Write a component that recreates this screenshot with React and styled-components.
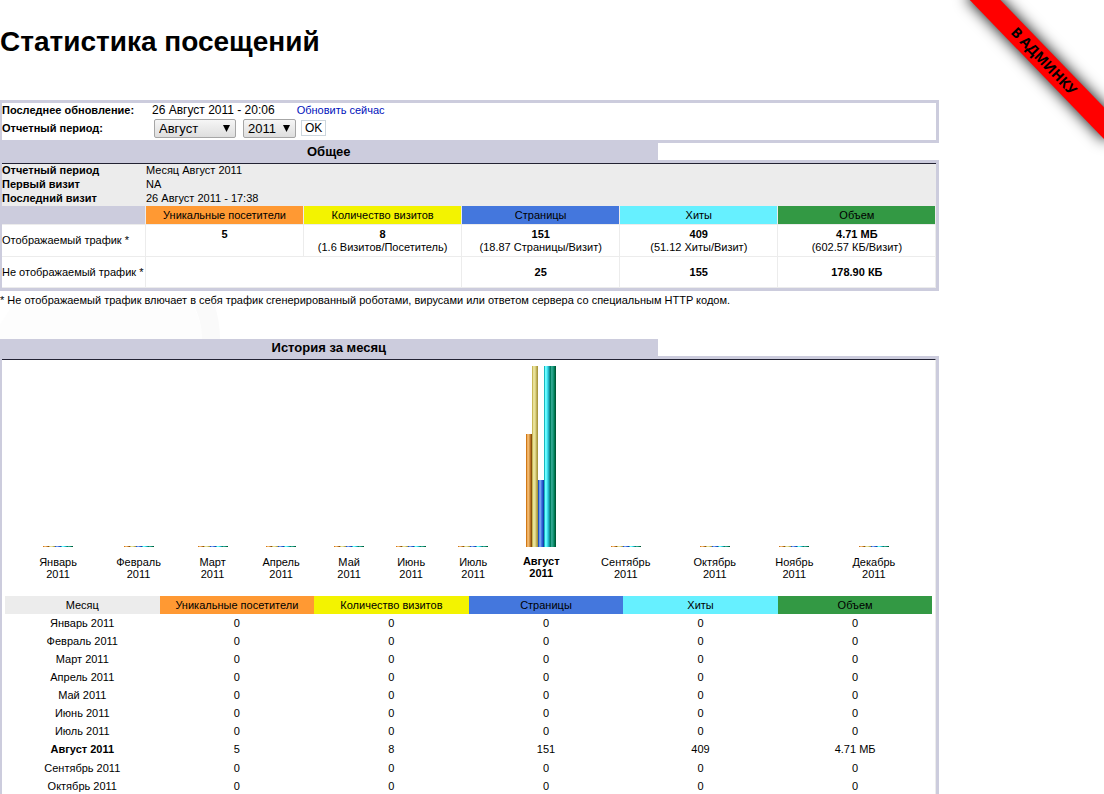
import React from "react";
import styled, { createGlobalStyle } from "styled-components";

const LILAC = "#ccccdd";
const LINE = "#ececec";

const Global = createGlobalStyle`
  *, *::before, *::after { box-sizing: border-box; }
  body {
    margin: 0;
    background: #fff;
    color: #000;
    font: 11px/14px "Liberation Sans", Arial, sans-serif;
    overflow-x: hidden;
  }
`;

const Page = styled.div`
  position: relative;
  overflow: hidden;
  padding-top: 24px;
`;

const Title = styled.h1`
  margin: 0 0 40px;
  font-size: 28px;
  line-height: 36px;
`;

const Content = styled.main`
  width: calc(85% + 1px);
`;

const Panel = styled.section`
  border: 3px solid ${LILAC};
  border-left-width: 2px;
`;

const PanelTitle = styled.h2`
  width: 70%;
  height: 17px;
  margin: 0;
  background: ${LILAC};
  font-size: 13px;
  line-height: 17px;
  text-align: center;
`;

const Ruled = styled.div`
  border-top: 1px solid #222233;
  border-right: ${(p) => (p.$edge ? `1px solid ${LINE}` : "0")};
`;

const Controls = styled.form`
  display: grid;
  grid-template-columns: 150px 1fr;
  grid-template-rows: 13px 22px;
  row-gap: 1px;
  align-items: center;
  padding-bottom: 1px;
`;

const ControlLabel = styled.label`
  font-weight: bold;
`;

const ControlLine = styled.div`
  display: flex;
  align-items: center;
  font-size: 12px;
  gap: ${(p) => p.$gap}px;
  padding-left: ${(p) => p.$indent || 0}px;
`;

const UpdateLink = styled.a`
  color: #0011bb;
  font-size: 11px;
  text-decoration: none;
`;

const SelectBox = styled.span`
  display: grid;
  align-items: center;
  margin-right: ${(p) => p.$after}px;
`;

const Select = styled.select`
  grid-area: 1 / 1;
  appearance: none;
  width: ${(p) => p.$width}px;
  height: 19px;
  padding: 0 4px;
  border: 1px solid #a6a6a6;
  border-radius: 2px;
  background: linear-gradient(#f6f6f6, #dedede);
  color: #000;
  font: 13px/17px "Liberation Sans", Arial, sans-serif;
`;

const Arrow = styled.svg`
  grid-area: 1 / 1;
  justify-self: end;
  margin-right: 6px;
  pointer-events: none;
`;

const OkButton = styled.button`
  height: 16px;
  padding: 0 3px;
  border: 1px solid #ccd6dd;
  background: #fff;
  color: #000;
  font: 12px/14px "Liberation Sans", Arial, sans-serif;
`;

const Facts = styled.dl`
  display: grid;
  grid-template-columns: 144px 1fr;
  grid-auto-rows: 14px;
  margin: 0;
  background: ${LINE};
  line-height: 12px;
  dt { font-weight: bold; }
  dd { margin: 0; }
`;

const Table = styled.table`
  width: 100%;
  border-collapse: separate;
  border-spacing: 0;
  table-layout: fixed;
  line-height: 13px;
  text-align: center;
  th, td { padding: 0; font-weight: normal; }
`;

const HeadCell = styled.th`
  height: ${(p) => (p.$ruled ? 19 : 18)}px;
  background: ${(p) => p.$color};
  background-clip: padding-box;
  border: 0 solid ${LINE};
  border-width: ${(p) => (p.$ruled ? "0 1px 1px 0" : "0")};
`;

const LabelHead = styled(HeadCell)`
  width: 144px;
`;

const TrafficCell = styled.td`
  height: ${(p) => p.$height}px;
  border: 0 solid ${LINE};
  border-width: 0 1px 1px 0;
`;

const TrafficLabel = styled(TrafficCell)`
  text-align: left;
`;

const Note = styled.div`
  position: relative;
  height: 48px;
  padding-top: 2px;
  overflow: hidden;
`;

const NoteText = styled.p`
  position: relative;
  margin: 0;
`;

const Watermark = styled.svg`
  position: absolute;
  left: 0;
  bottom: 0;
`;

const Chart = styled.div`
  display: grid;
  grid-template-columns: 76fr 85fr 63fr 74fr 62fr 62fr 62fr 74fr 95fr 83fr 76fr 83fr;
  padding: 6px 20px 16px 18px;
  text-align: center;
  line-height: 12px;
`;

const MonthColumn = styled.div`
  display: flex;
  flex-direction: column;
  align-items: center;
  font-weight: ${(p) => (p.$current ? "bold" : "normal")};
`;

const Bars = styled.div`
  display: flex;
  align-items: flex-end;
  height: 181px;
  margin-bottom: ${(p) => (p.$current ? 8 : 9)}px;
`;

const Bar = styled.div`
  width: 6px;
  background: ${(p) => p.$fill};
`;

const Months = styled.div`
  padding: 0 3px;
`;

const MonthCell = styled.td`
  height: ${(p) => (p.$current ? 19 : 18)}px;
`;

const MonthName = styled.th`
  && { font-weight: ${(p) => (p.$current ? "bold" : "normal")}; }
`;

const Ribbon = styled.a`
  position: absolute;
  top: 50px;
  right: -40px;
  width: 200px;
  height: 22px;
  background: #f00;
  box-shadow: 0 0 15px #000;
  color: #000;
  font: bold 14px/22px "Open Sans", sans-serif;
  text-align: center;
  text-decoration: none;
  transform: rotate(46deg);
`;

const stripes = (...colors) =>
  `linear-gradient(90deg, ${colors
    .map((c, i) => `${c} ${i}px ${i + 1}px`)
    .join(", ")})`;

const FILLS = [
  stripes("#d07818", "#f0b060", "#f0b870", "#d89848", "#b87020", "#885010"),
  stripes("#c8b858", "#e8e098", "#e8e098", "#d8d080", "#c0b058", "#a89840"),
  stripes("#2050c0", "#6898f0", "#78a0f0", "#4878e0", "#2858d0", "#1840a8"),
  stripes("#18b8c0", "#70ffff", "#60f8ff", "#40d8e8", "#20b8c8", "#109098"),
  stripes("#008060", "#30a890", "#28a088", "#109070", "#007850", "#005838"),
];

const HEADS = [
  ["Уникальные посетители", "#ff9933"],
  ["Количество визитов", "#f3f300"],
  ["Страницы", "#4477dd"],
  ["Хиты", "#66f0ff"],
  ["Объем", "#339944"],
];

const VIEWED = [
  ["5", ""],
  ["8", "(1.6 Визитов/Посетитель)"],
  ["151", "(18.87 Страницы/Визит)"],
  ["409", "(51.12 Хиты/Визит)"],
  ["4.71 МБ", "(602.57 КБ/Визит)"],
];

const MONTHS = [
  "Январь", "Февраль", "Март", "Апрель", "Май", "Июнь",
  "Июль", "Август", "Сентябрь", "Октябрь", "Ноябрь", "Декабрь",
];
const CURRENT = "Август";
const EMPTY_BARS = [1, 1, 1, 1, 1];
const CURRENT_BARS = [113, 181, 67, 181, 181];
const EMPTY_VALUES = ["0", "0", "0", "0", "0"];
const CURRENT_VALUES = ["5", "8", "151", "409", "4.71 МБ"];

function Dropdown({ id, label, width, after, options, value }) {
  return (
    <SelectBox $after={after}>
      <Select id={id} aria-label={label} $width={width} defaultValue={value}>
        {options.map((o) => <option key={o}>{o}</option>)}
      </Select>
      <Arrow width="7" height="7" viewBox="0 0 7 7" aria-hidden="true">
        <path d="M0 0H7L3.5 7Z" />
      </Arrow>
    </SelectBox>
  );
}

export default function App() {
  return (
    <>
      <Global />
      <Page>
        <Title>Статистика посещений</Title>
        <Content>
          <Panel>
            <Controls onSubmit={(e) => e.preventDefault()}>
              <ControlLabel as="span">Последнее обновление:</ControlLabel>
              <ControlLine $gap={22}>
                <span>26 Август 2011 - 20:06</span>
                <UpdateLink href="#update">Обновить сейчас</UpdateLink>
              </ControlLine>
              <ControlLabel htmlFor="month">Отчетный период:</ControlLabel>
              <ControlLine $gap={0} $indent={2}>
                <Dropdown id="month" label="Месяц" width={82} after={7} options={MONTHS} value={CURRENT} />
                <Dropdown id="year" label="Год" width={53} after={5} options={["2010", "2011"]} value="2011" />
                <OkButton type="submit">OK</OkButton>
              </ControlLine>
            </Controls>
          </Panel>

          <PanelTitle>Общее</PanelTitle>
          <Panel>
            <Ruled>
              <Facts>
                <dt>Отчетный период</dt>
                <dd>Месяц Август 2011</dd>
                <dt>Первый визит</dt>
                <dd>NA</dd>
                <dt>Последний визит</dt>
                <dd>26 Август 2011 - 17:38</dd>
              </Facts>
              <Table>
                <thead>
                  <tr>
                    <LabelHead $ruled $color={LILAC} />
                    {HEADS.map(([name, color]) => (
                      <HeadCell key={name} $ruled $color={color}>{name}</HeadCell>
                    ))}
                  </tr>
                </thead>
                <tbody>
                  <tr>
                    <TrafficLabel $height={32}>Отображаемый трафик *</TrafficLabel>
                    {VIEWED.map(([value, rate]) => (
                      <TrafficCell key={value} $height={32}>
                        <b>{value}</b>
                        <br />
                        {rate || "\u00a0"}
                      </TrafficCell>
                    ))}
                  </tr>
                  <tr>
                    <TrafficLabel $height={31}>Не отображаемый трафик *</TrafficLabel>
                    <TrafficCell colSpan={2} $height={31} />
                    <TrafficCell $height={31}><b>25</b></TrafficCell>
                    <TrafficCell $height={31}><b>155</b></TrafficCell>
                    <TrafficCell $height={31}><b>178.90 КБ</b></TrafficCell>
                  </tr>
                </tbody>
              </Table>
            </Ruled>
          </Panel>
          <Note>
            <Watermark width="220" height="36" viewBox="0 0 220 36" aria-hidden="true">
              <path d="M0 22C5 14 9 8 14 0H192C198 12 202 24 203 36H0Z" fill="#fdfdfd" />
              <path d="M193 0H214C218 12 220 24 220 36H202C202 24 199 12 193 0Z" fill="#fafafa" />
            </Watermark>
            <NoteText>
              * Не отображаемый трафик влючает в себя трафик сгенерированный роботами, вирусами или ответом сервера со специальным HTTP кодом.
            </NoteText>
          </Note>

          <PanelTitle>История за месяц</PanelTitle>
          <Panel>
            <Ruled $edge>
              <Chart>
                {MONTHS.map((month) => {
                  const current = month === CURRENT;
                  return (
                    <MonthColumn key={month} $current={current}>
                      <Bars $current={current}>
                        {(current ? CURRENT_BARS : EMPTY_BARS).map((h, i) => (
                          <Bar key={i} $fill={FILLS[i]} style={{ height: h }} />
                        ))}
                      </Bars>
                      <span>{month}</span>
                      <span>2011</span>
                    </MonthColumn>
                  );
                })}
              </Chart>
              <Months>
                <Table>
                  <thead>
                    <tr>
                      <HeadCell $color={LINE}>Месяц</HeadCell>
                      {HEADS.map(([name, color]) => (
                        <HeadCell key={name} $color={color}>{name}</HeadCell>
                      ))}
                    </tr>
                  </thead>
                  <tbody>
                    {MONTHS.slice(0, 10).map((month) => {
                      const current = month === CURRENT;
                      return (
                        <tr key={month}>
                          <MonthName scope="row" $current={current}>{month} 2011</MonthName>
                          {(current ? CURRENT_VALUES : EMPTY_VALUES).map((v, i) => (
                            <MonthCell key={i} $current={current}>{v}</MonthCell>
                          ))}
                        </tr>
                      );
                    })}
                  </tbody>
                </Table>
              </Months>
            </Ruled>
          </Panel>
        </Content>
        <Ribbon href="#admin">В АДМИНКУ</Ribbon>
      </Page>
    </>
  );
}
